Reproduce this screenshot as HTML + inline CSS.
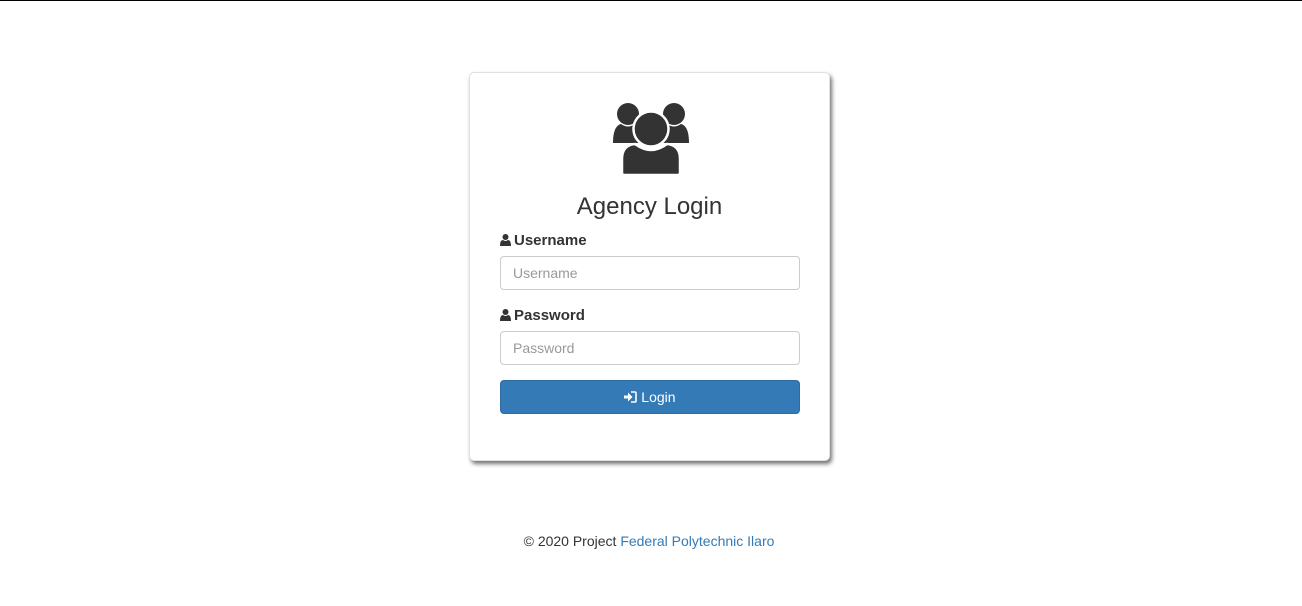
<!DOCTYPE html>
<html><head><style>
body{margin:0;width:1302px;height:606px;background:#fff;font-family:"Liberation Sans",sans-serif;color:#333;font-size:14px;position:relative;border-top:1px solid #000;box-sizing:border-box}
.card{position:absolute;left:469px;top:71px;width:361px;height:389px;box-sizing:border-box;background:#fff;border:1px solid #e0e0e0;border-radius:5px;box-shadow:2px 3px 4px rgba(0,0,0,.55)}
.t{position:absolute;left:0;width:100%;text-align:center;top:120px;font-size:24px;line-height:28px}
.lbl{position:absolute;left:30px;font-weight:bold;font-size:15px;line-height:16px}
.lbl svg{vertical-align:-1px;margin-right:3px}
.in{position:absolute;left:30px;width:300px;height:34px;box-sizing:border-box;border:1px solid #ccc;border-radius:4px;padding:0 12px;line-height:32px;color:#999;font-size:14px}
.btn{position:absolute;left:30px;top:307px;width:300px;height:34px;background:#337ab7;border:1px solid #2e6da4;box-sizing:border-box;border-radius:4px;color:#fff;text-align:center;line-height:32px;font-size:14px}
.f{position:absolute;top:532px;left:-2px;width:100%;text-align:center;font-size:14px}
.f a{color:#337ab7;text-decoration:none}
</style></head><body>
<div class="card">
<svg style="position:absolute;left:141px;top:28px" width="80" height="75" viewBox="0 0 80 75">
<circle cx="17" cy="13" r="11" fill="#333"/><circle cx="63" cy="13" r="11" fill="#333"/>
<path d="M2 42 Q2 25 10 23 Q17 28 24 23 Q32 25 32 42Z" fill="#333"/>
<path d="M48 42 Q48 25 56 23 Q63 28 70 23 Q78 25 78 42Z" fill="#333"/>
<circle cx="40" cy="28" r="17.5" fill="#333" stroke="#fff" stroke-width="2.5"/>
<path d="M11 72 L11 58 Q11 44 24 43 Q32 49 40 49 Q48 49 56 43 Q69 44 69 58 L69 72 Q69 74 66 74 L14 74 Q11 74 11 72Z" fill="#333" stroke="#fff" stroke-width="2.5"/>
</svg>
<div class="t">Agency Login</div>
<div class="lbl" style="top:160px"><svg width="11" height="12" viewBox="0 0 11 12"><circle cx="5.5" cy="3" r="3" fill="#333"/><path d="M0 12 Q0 6 3 6 Q5.5 8 8 6 Q11 6 11 12Z" fill="#333"/></svg>Username</div>
<div class="in" style="top:183px">Username</div>
<div class="lbl" style="top:235px"><svg width="11" height="12" viewBox="0 0 11 12"><circle cx="5.5" cy="3" r="3" fill="#333"/><path d="M0 12 Q0 6 3 6 Q5.5 8 8 6 Q11 6 11 12Z" fill="#333"/></svg>Password</div>
<div class="in" style="top:258px">Password</div>
<div class="btn"><svg width="13" height="12" viewBox="0 0 13 12" style="vertical-align:-1px"><path d="M0 4.5H4V1.5L8.5 6L4 10.5V7.5H0Z" fill="#fff"/><path d="M7 1H11Q12 1 12 2V10Q12 11 11 11H7" fill="none" stroke="#fff" stroke-width="1.6"/></svg> Login</div>
</div>
<div class="f">© 2020 Project <a>Federal Polytechnic Ilaro</a></div>
</body></html>
